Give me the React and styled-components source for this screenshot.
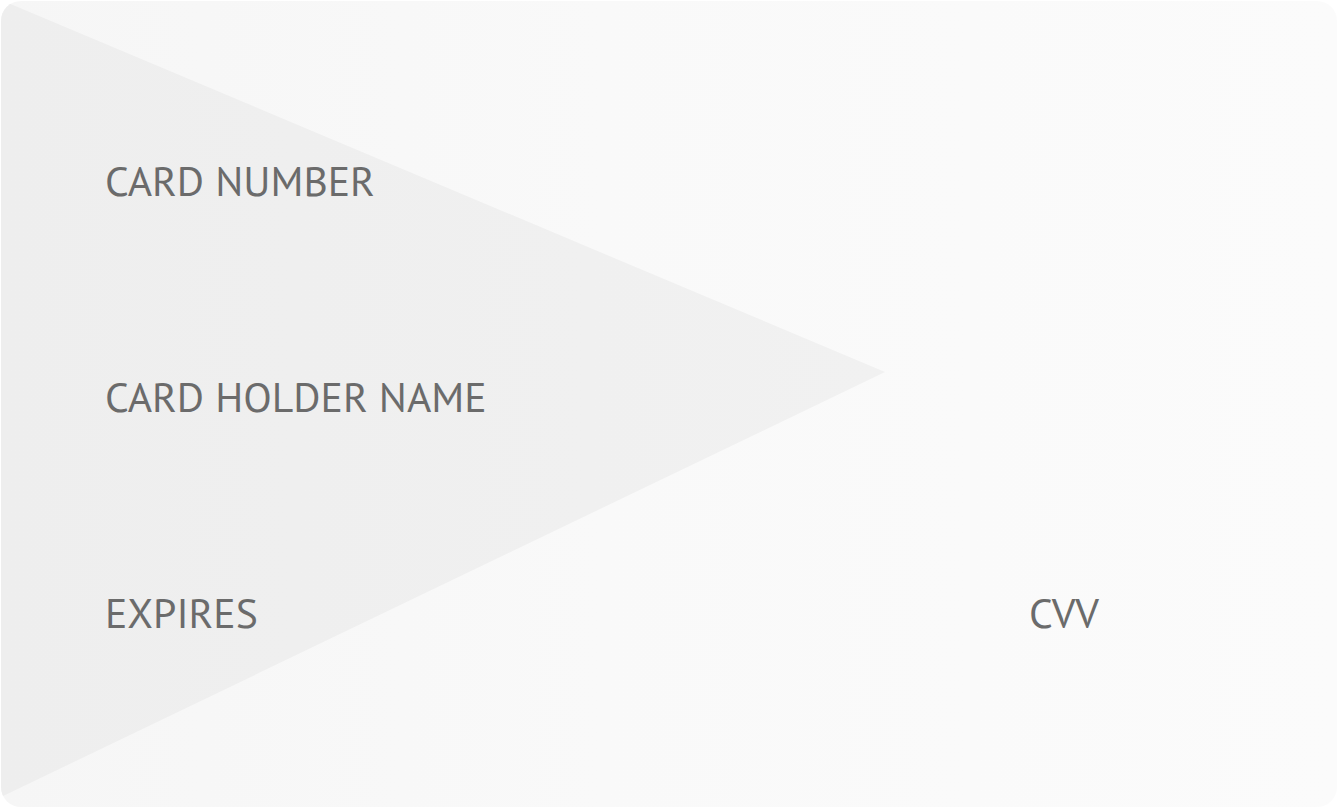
import React from 'react';
import styled, { createGlobalStyle } from 'styled-components';

const GlobalStyle = createGlobalStyle`
    html, body {
        margin: 0;
        padding: 0;
        background: #ffffff;
    }
    body {
        font-family: "PT Sans", "Open Sans", "Noto Sans", sans-serif;
    }
`;

const Card = styled.div`
    position: relative;
    box-sizing: border-box;
    width: 1336px;
    height: 806px;
    margin: 1px;
    border-radius: 20px;
    overflow: hidden;
    background: linear-gradient(to right, #f6f6f6 0%, #f9f9f9 45%, #fbfbfb 100%);
`;

const Shape = styled.svg`
    position: absolute;
    top: 0;
    left: 0;
    width: 100%;
    height: 100%;
`;

const Fields = styled.div`
    position: relative;
    box-sizing: border-box;
    height: 100%;
    padding: 153px 0 0 104px;
    display: grid;
    grid-template-columns: 924px auto;
    grid-template-rows: repeat(3, 216px);
    align-content: start;
    align-items: start;
`;

const Label = styled.div`
    font-size: 41.7px;
    line-height: 54px;
    color: #6b6b6b;
    grid-column: ${(p) => p.$col || '1 / 2'};
    grid-row: ${(p) => p.$row};
`;

const CardBackground = () => (
    <Shape viewBox="0 0 1336 806" preserveAspectRatio="none">
        <defs>
            <linearGradient id="tri" x1="0" y1="0" x2="1" y2="0">
                <stop offset="0" stopColor="#eeeeee" />
                <stop offset="1" stopColor="#f1f1f1" />
            </linearGradient>
        </defs>
        <polygon points="0,-1 884,371 0,796" fill="url(#tri)" />
    </Shape>
);

const App = () => (
    <>
        <GlobalStyle />
        <Card>
            <CardBackground />
            <Fields>
                <Label $row="1">CARD NUMBER</Label>
                <Label $row="2">CARD HOLDER NAME</Label>
                <Label $row="3">EXPIRES</Label>
                <Label $row="3" $col="2 / 3">CVV</Label>
            </Fields>
        </Card>
    </>
);

export default App;
